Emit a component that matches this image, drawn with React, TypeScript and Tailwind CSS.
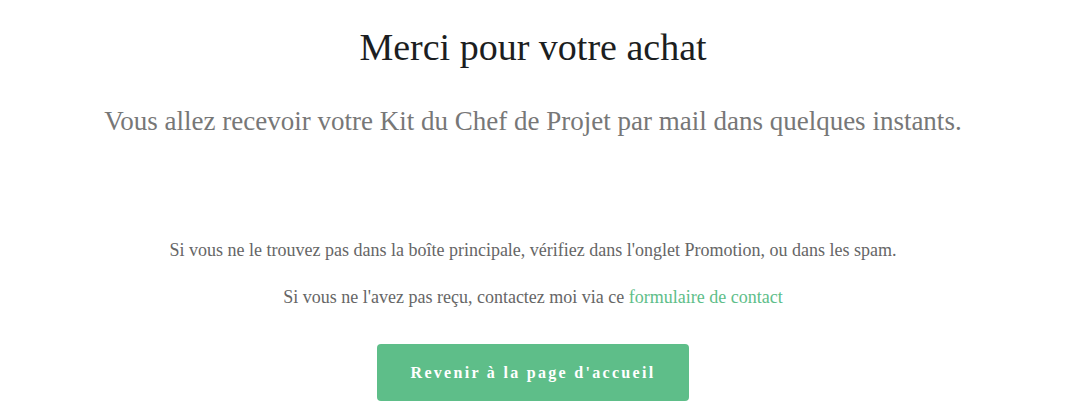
import React from "react";

export default function App() {
  return (
    <div
      className="min-h-[412px] w-full bg-white flex flex-col items-center text-center"
      style={{ fontFamily: '"Liberation Serif", "Times New Roman", serif' }}
    >
      <h1 className="mt-[24px] text-[38px] leading-[46px] text-[#1c1e21]">
        Merci pour votre achat
      </h1>
      <p className="mt-[35px] text-[27px] leading-[32px] text-[#777777]">
        Vous allez recevoir votre Kit du Chef de Projet par mail dans quelques instants.
      </p>
      <p className="mt-[102px] text-[18px] leading-[22px] text-[#666666]">
        Si vous ne le trouvez pas dans la boîte principale, vérifiez dans l'onglet Promotion, ou dans les spam.
      </p>
      <p className="mt-[25px] text-[18px] leading-[22px] text-[#666666]">
        Si vous ne l'avez pas reçu, contactez moi via ce{" "}
        <a href="#" className="text-[#5ebe89]">
          formulaire de contact
        </a>
      </p>
      <a
        href="#"
        className="mt-[36px] flex h-[57px] w-[312px] items-center justify-center rounded-[4px] bg-[#5ebe89] text-[16px] font-bold tracking-[2.3px] text-white"
      >
        Revenir à la page d'accueil
      </a>
    </div>
  );
}
